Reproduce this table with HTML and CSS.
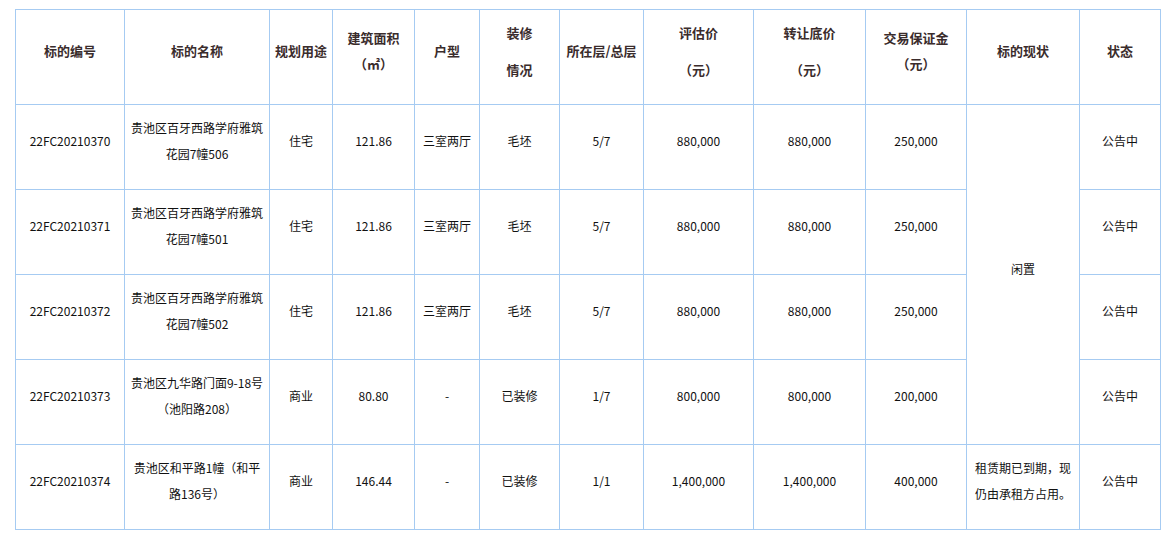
FILE: index.html
```html
<!DOCTYPE html>
<html lang="zh-CN">
<head>
<meta charset="utf-8">
<title>标的列表</title>
<link rel="stylesheet" href="styles.css">
</head>
<body>
<div class="wrap">
<table class="lots">
  <colgroup>
    <col class="c1"><col class="c2"><col class="c3"><col class="c4"><col class="c5"><col class="c6">
    <col class="c7"><col class="c8"><col class="c9"><col class="c10"><col class="c11"><col class="c12">
  </colgroup>
  <thead>
    <tr class="head">
      <th>标的编号</th>
      <th>标的名称</th>
      <th>规划用途</th>
      <th>建筑面积（㎡）</th>
      <th>户型</th>
      <th><span class="ln">装修</span><span class="ln gap">情况</span></th>
      <th>所在层/总层</th>
      <th><span class="ln">评估价</span><span class="ln gap">（元）</span></th>
      <th><span class="ln">转让底价</span><span class="ln gap">（元）</span></th>
      <th>交易保证金（元）</th>
      <th>标的现状</th>
      <th>状态</th>
    </tr>
  </thead>
  <tbody>
    <tr>
      <td>22FC20210370</td>
      <td>贵池区百牙西路学府雅筑花园7幢506</td>
      <td>住宅</td>
      <td>121.86</td>
      <td>三室两厅</td>
      <td>毛坯</td>
      <td>5/7</td>
      <td>880,000</td>
      <td>880,000</td>
      <td>250,000</td>
      <td rowspan="4">闲置</td>
      <td>公告中</td>
    </tr>
    <tr>
      <td>22FC20210371</td>
      <td>贵池区百牙西路学府雅筑花园7幢501</td>
      <td>住宅</td>
      <td>121.86</td>
      <td>三室两厅</td>
      <td>毛坯</td>
      <td>5/7</td>
      <td>880,000</td>
      <td>880,000</td>
      <td>250,000</td>
      <td>公告中</td>
    </tr>
    <tr>
      <td>22FC20210372</td>
      <td>贵池区百牙西路学府雅筑花园7幢502</td>
      <td>住宅</td>
      <td>121.86</td>
      <td>三室两厅</td>
      <td>毛坯</td>
      <td>5/7</td>
      <td>880,000</td>
      <td>880,000</td>
      <td>250,000</td>
      <td>公告中</td>
    </tr>
    <tr>
      <td>22FC20210373</td>
      <td>贵池区九华路门面9-18号（池阳路208）</td>
      <td>商业</td>
      <td>80.80</td>
      <td>-</td>
      <td>已装修</td>
      <td>1/7</td>
      <td>800,000</td>
      <td>800,000</td>
      <td>200,000</td>
      <td>公告中</td>
    </tr>
    <tr>
      <td>22FC20210374</td>
      <td>贵池区和平路1幢（和平路136号）</td>
      <td>商业</td>
      <td>146.44</td>
      <td>-</td>
      <td>已装修</td>
      <td>1/1</td>
      <td>1,400,000</td>
      <td>1,400,000</td>
      <td>400,000</td>
      <td>租赁期已到期，现仍由承租方占用。</td>
      <td>公告中</td>
    </tr>
  </tbody>
</table>
</div>
</body>
</html>
```

FILE: styles.css
```css
html, body {
  margin: 0;
  padding: 0;
  background: #ffffff;
}

.wrap {
  padding: 9px 0 0 15px;
}

.lots {
  border-collapse: collapse;
  table-layout: fixed;
  width: 1146px;
  font-family: "Noto Sans CJK SC", "Liberation Sans", sans-serif;
  font-size: 12px;
  line-height: 26px;
  color: #111111;
}

.c1 { width: 109px; }
.c2 { width: 145px; }
.c3 { width: 63px; }
.c4 { width: 82px; }
.c5 { width: 65px; }
.c6 { width: 80px; }
.c7 { width: 84px; }
.c8 { width: 110px; }
.c9 { width: 112px; }
.c10 { width: 101px; }
.c11 { width: 113px; }
.c12 { width: 81px; }

.lots th,
.lots td {
  border: 1px solid #a6cbf2;
  text-align: center;
  vertical-align: middle;
  padding: 0 4px 12px;
}

.lots th {
  font-size: 13px;
  font-weight: bold;
  color: #3a2c2c;
}

.head {
  height: 95px;
}

.lots tbody tr {
  height: 85px;
}

.ln {
  display: block;
}

.gap {
  margin-top: 11px;
}
```
